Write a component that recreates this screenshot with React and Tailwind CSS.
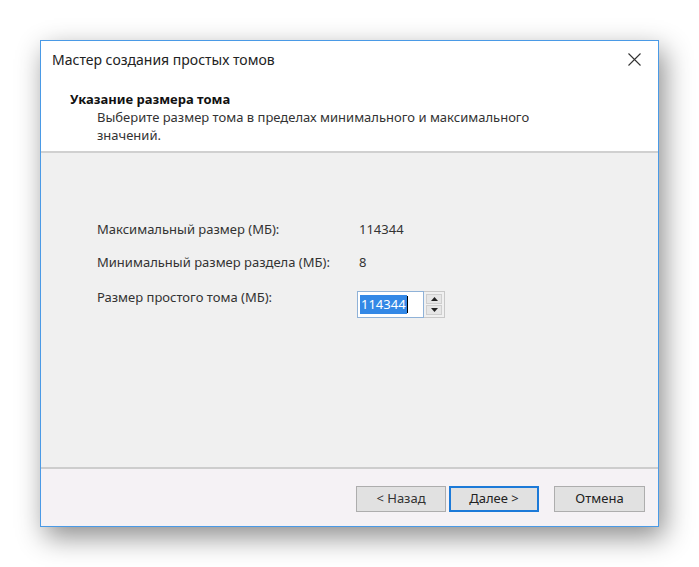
import { useState } from "react";

export default function App() {
  const [size, setSize] = useState(114344);

  return (
    <div className="min-h-screen bg-white pt-[40px] pl-[40px] font-['Noto_Sans',sans-serif] text-[13px] text-[#1e1e1e]">
      <div className="w-[619px] h-[487px] flex flex-col border border-[#4a9ae6] bg-white shadow-[5px_10px_26px_rgba(0,0,0,0.45)]">
        {/* header */}
        <div className="h-[110px] bg-white flex flex-col">
          <div className="h-[37px] flex items-center justify-between pl-[11px] pr-[12px]">
            <span className="text-[14px] leading-none text-[#222]">Мастер создания простых томов</span>
            <button className="w-[24px] h-[24px] flex items-center justify-center">
              <svg width="13" height="13" viewBox="0 0 13 13">
                <path d="M0.5 0.5 L12.5 12.5 M12.5 0.5 L0.5 12.5" stroke="#333" strokeWidth="1.1" />
              </svg>
            </button>
          </div>
          <div className="pl-[29px] pt-[12px]">
            <div className="font-bold leading-[18px] text-[#111]">Указание размера тома</div>
            <div className="pl-[27px] leading-[18px] text-[#333] w-[470px]">
              Выберите размер тома в пределах минимального и максимального значений.
            </div>
          </div>
        </div>
        <div className="h-[2px] bg-[#d0d0d0]" />

        {/* content */}
        <div className="h-[314px] bg-[#f0f0f0] pl-[56px] pt-[67px] text-[#333]">
          <div className="flex items-center h-[20px]">
            <span className="w-[262px]">Максимальный размер (МБ):</span>
            <span>114344</span>
          </div>
          <div className="flex items-center h-[20px] mt-[13px]">
            <span className="w-[262px]">Минимальный размер раздела (МБ):</span>
            <span>8</span>
          </div>
          <div className="flex items-start mt-[18px]">
            <span className="w-[260px] -mt-[3px] leading-[18px]">Размер простого тома (МБ):</span>
            <div className="flex">
              <div className="w-[67px] h-[27px] border border-[#8fb2d8] bg-white flex items-center pl-[2px]">
                <span className="bg-[#3388e6] text-white leading-[19px] px-[1px]">{size}</span>
                <span className="w-[1px] h-[17px] bg-black" />
              </div>
              <div className="w-[21px] h-[27px] border border-l-0 border-[#c8c8c8] bg-[#f0f0f0] flex flex-col p-[2px] gap-[1px]">
                <button
                  onClick={() => setSize(size + 1)}
                  className="flex-1 bg-[#e6e6e6] border border-[#cfcfcf] flex items-center justify-center"
                >
                  <svg width="7" height="4" viewBox="0 0 7 4"><path d="M3.5 0 L7 4 L0 4 Z" fill="#222" /></svg>
                </button>
                <button
                  onClick={() => setSize(size - 1)}
                  className="flex-1 bg-[#e6e6e6] border border-[#cfcfcf] flex items-center justify-center"
                >
                  <svg width="7" height="4" viewBox="0 0 7 4"><path d="M0 0 L7 0 L3.5 4 Z" fill="#222" /></svg>
                </button>
              </div>
            </div>
          </div>
        </div>
        <div className="h-[2px] bg-[#cdcdcd]" />

        {/* footer */}
        <div className="flex-1 bg-[#f5f2f5] flex justify-end items-start pt-[17px] pr-[13px]">
          <button className="w-[90px] h-[26px] bg-[#e1e1e1] border border-[#adadad] text-[#333]">&lt; Назад</button>
          <button className="w-[90px] h-[26px] ml-[3px] bg-[#e1e1e1] border-2 border-[#1c7ad8] text-[#222]">Далее &gt;</button>
          <button className="w-[91px] h-[26px] ml-[15px] bg-[#e1e1e1] border border-[#adadad] text-[#222]">Отмена</button>
        </div>
      </div>
    </div>
  );
}
